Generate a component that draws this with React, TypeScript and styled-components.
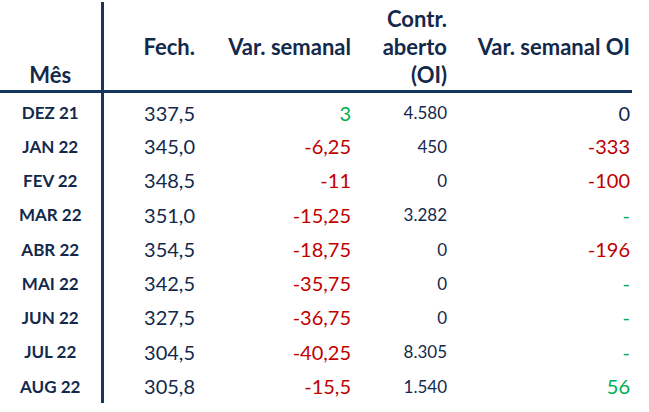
import styled, { createGlobalStyle } from 'styled-components';

type Tone = 'plain' | 'down' | 'up';

interface RowType {
  month: string;
  close: string;
  weekVar: string;
  weekTone: Tone;
  openInt: string;
  oiVar: string;
  oiTone: Tone;
}

const rows: RowType[] = [
  { month: 'DEZ 21', close: '337,5', weekVar: '3', weekTone: 'up', openInt: '4.580', oiVar: '0', oiTone: 'plain' },
  { month: 'JAN 22', close: '345,0', weekVar: '-6,25', weekTone: 'down', openInt: '450', oiVar: '-333', oiTone: 'down' },
  { month: 'FEV 22', close: '348,5', weekVar: '-11', weekTone: 'down', openInt: '0', oiVar: '-100', oiTone: 'down' },
  { month: 'MAR 22', close: '351,0', weekVar: '-15,25', weekTone: 'down', openInt: '3.282', oiVar: '-', oiTone: 'up' },
  { month: 'ABR 22', close: '354,5', weekVar: '-18,75', weekTone: 'down', openInt: '0', oiVar: '-196', oiTone: 'down' },
  { month: 'MAI 22', close: '342,5', weekVar: '-35,75', weekTone: 'down', openInt: '0', oiVar: '-', oiTone: 'up' },
  { month: 'JUN 22', close: '327,5', weekVar: '-36,75', weekTone: 'down', openInt: '0', oiVar: '-', oiTone: 'up' },
  { month: 'JUL 22', close: '304,5', weekVar: '-40,25', weekTone: 'down', openInt: '8.305', oiVar: '-', oiTone: 'up' },
  { month: 'AUG 22', close: '305,8', weekVar: '-15,5', weekTone: 'down', openInt: '1.540', oiVar: '56', oiTone: 'up' },
];

const toneColor = {
  plain: '#13294b',
  down: '#c00000',
  up: '#00b050',
};

const GlobalStyle = createGlobalStyle`
  html, body {
    margin: 0;
    padding: 0;
    background: #ffffff;
  }
  body {
    font-family: Lato, "Liberation Sans", sans-serif;
    color: #13294b;
  }
`;

const Page = styled.div`
  padding-top: 2px;
`;

const Table = styled.table`
  border-collapse: collapse;
  border-spacing: 0;
  table-layout: fixed;
  width: 632px;
`;

const HeadCell = styled.th<{ $first?: boolean; $w: number; $pr: number }>`
  width: ${(p) => p.$w}px;
  height: 89px;
  padding: 0 ${(p) => p.$pr}px 1px 0;
  vertical-align: bottom;
  text-align: ${(p) => (p.$first ? 'center' : 'right')};
  font-size: 22px;
  font-weight: 700;
  line-height: 28px;
  color: #13294b;
  border-bottom: 3px solid #17365d;
  border-right: ${(p) => (p.$first ? '3px solid #17365d' : 'none')};
  box-sizing: border-box;
`;

// rows are ~34.2px apart; two of them take an extra pixel to keep the pitch
const Row = styled.tr<{ $h: number }>`
  height: ${(p) => p.$h}px;
`;

const MonthCell = styled.td<{ $top?: boolean }>`
  padding: ${(p) => (p.$top ? 4 : 0)}px 0 0 0;
  text-align: center;
  font-size: 17px;
  font-weight: 700;
  color: #13294b;
  border-right: 3px solid #17365d;
`;

const ValueCell = styled.td<{ $tone: Tone; $pr: number; $small?: boolean; $top?: boolean }>`
  padding: ${(p) => (p.$top ? 4 : 0)}px ${(p) => p.$pr}px 0 0;
  text-align: right;
  font-size: ${(p) => (p.$small ? 17 : 20)}px;
  font-weight: 400;
  color: ${(p) => toneColor[p.$tone]};
`;

const cols = [
  { w: 102, pr: 0 },
  { w: 98, pr: 5 },
  { w: 155, pr: 4 },
  { w: 95, pr: 3 },
  { w: 182, pr: 2 },
];

const rowHeight = (i: number) => {
  if (i === 0) return 38;
  if (i === 3 || i === 7) return 35;
  return 34;
};

const App = () => {
  return (
    <>
      <GlobalStyle />
      <Page>
        <Table>
          <thead>
            <tr>
              <HeadCell $first $w={cols[0].w} $pr={0}>Mês</HeadCell>
              <HeadCell $w={cols[1].w} $pr={cols[1].pr}>Fech.<br /><br /></HeadCell>
              <HeadCell $w={cols[2].w} $pr={cols[2].pr}>Var. semanal<br /><br /></HeadCell>
              <HeadCell $w={cols[3].w} $pr={cols[3].pr}>Contr.<br />aberto<br />(OI)</HeadCell>
              <HeadCell $w={cols[4].w} $pr={cols[4].pr}>Var. semanal OI<br /><br /></HeadCell>
            </tr>
          </thead>
          <tbody>
            {rows.map((r, i) => (
              <Row key={r.month} $h={rowHeight(i)}>
                <MonthCell $top={i === 0}>{r.month}</MonthCell>
                <ValueCell $tone="plain" $pr={cols[1].pr} $top={i === 0}>{r.close}</ValueCell>
                <ValueCell $tone={r.weekTone} $pr={cols[2].pr} $top={i === 0}>{r.weekVar}</ValueCell>
                <ValueCell $tone="plain" $pr={cols[3].pr} $small $top={i === 0}>{r.openInt}</ValueCell>
                <ValueCell $tone={r.oiTone} $pr={cols[4].pr} $top={i === 0}>{r.oiVar}</ValueCell>
              </Row>
            ))}
          </tbody>
        </Table>
      </Page>
    </>
  );
};

export default App;
